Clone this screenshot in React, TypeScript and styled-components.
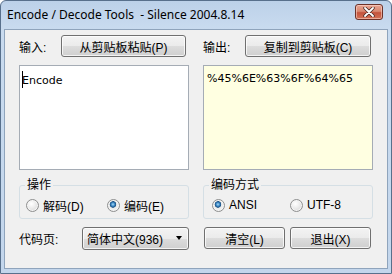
import styled, { createGlobalStyle } from 'styled-components'

const GlobalStyle = createGlobalStyle`
    html, body {
        margin: 0;
        padding: 0;
        background: #ffffff;
    }
    body {
        font-family: "Liberation Sans", "Noto Sans CJK SC", sans-serif;
        font-size: 12px;
        color: #000;
    }
`

export default function App() {
    return (
        <>
            <GlobalStyle />
            <Window>
                <TitleBar>
                    <Title>Encode / Decode Tools  - Silence 2004.8.14</Title>
                    <CloseButton aria-label='close'>
                        <svg width='12' height='10' viewBox='0 0 12 10'>
                            <path d='M2 1 L10 9 M10 1 L2 9' stroke='#4a2a25' strokeWidth='3.4' strokeLinecap='round' />
                            <path d='M2 1 L10 9 M10 1 L2 9' stroke='#ffffff' strokeWidth='1.8' strokeLinecap='round' />
                        </svg>
                    </CloseButton>
                </TitleBar>

                <Body>
                    <LabelRow>
                        <FieldLabel $w={42}>输入:</FieldLabel>
                        <Button $w={125}>从剪贴板粘贴(P)</Button>
                    </LabelRow>
                    <LabelRow>
                        <FieldLabel $w={42}>输出:</FieldLabel>
                        <Button $w={126}>复制到剪贴板(C)</Button>
                    </LabelRow>

                    <TextBox>
                        <Caret />
                        Encode
                    </TextBox>
                    <TextBox $readonly>%45%6E%63%6F%64%65</TextBox>

                    <Group $pad={6} $item={81}>
                        <Legend>操作</Legend>
                        <Option>
                            <RadioDot />
                            解码(D)
                        </Option>
                        <Option>
                            <RadioDot $checked />
                            编码(E)
                        </Option>
                    </Group>
                    <Group $pad={8} $item={78}>
                        <Legend>编码方式</Legend>
                        <Option>
                            <RadioDot $checked />
                            ANSI
                        </Option>
                        <Option>
                            <RadioDot />
                            UTF-8
                        </Option>
                    </Group>

                    <LabelRow>
                        <FieldLabel $w={63}>代码页:</FieldLabel>
                        <Select>
                            <span>简体中文(936)</span>
                            <Arrow />
                        </Select>
                    </LabelRow>
                    <ButtonRow>
                        <Button $w={81}>清空(L)</Button>
                        <Button $w={81}>退出(X)</Button>
                    </ButtonRow>
                </Body>
            </Window>
        </>
    )
}

const Window = styled.div`
    width: 392px;
    height: 274px;
    box-sizing: border-box;
    display: flex;
    flex-direction: column;
    border: 1px solid #58708c;
    border-radius: 6px 6px 0 0;
    background: linear-gradient(180deg, #bcd1e9 0px, #c9dbef 28px, #c3d6ec 100%);
    padding: 0 3px 4px 3px;
`

const TitleBar = styled.div`
    height: 28px;
    flex: none;
    display: flex;
    align-items: flex-start;
    justify-content: space-between;
    padding: 0 5px 0 3px;
`

const Title = styled.div`
    font-family: "Noto Sans", "Open Sans", sans-serif;
    font-size: 12px;
    line-height: 16px;
    margin-top: 6px;
    white-space: pre;
    color: #000;
`

const CloseButton = styled.div`
    width: 28px;
    height: 16px;
    margin-top: 3px;
    box-sizing: border-box;
    border: 1px solid #6d3229;
    border-radius: 3px;
    background: linear-gradient(180deg, #e8a493 0%, #d98870 45%, #c4533c 55%, #d37257 100%);
    box-shadow: inset 0 0 0 1px rgba(255, 220, 210, 0.55);
    display: flex;
    align-items: center;
    justify-content: center;
`

const Body = styled.div`
    flex: 1;
    background: #f0f0f0;
    border: 1px solid #8fa4bc;
    display: grid;
    grid-template-columns: 170px 170px;
    grid-template-rows: 22px 105px 41px 22px;
    column-gap: 14px;
    row-gap: 8px;
    padding: 5px 0 0 14px;
`

const LabelRow = styled.div`
    display: flex;
    align-items: center;
`

const FieldLabel = styled.span<{ $w: number }>`
    width: ${(p) => p.$w}px;
    flex: none;
`

const Button = styled.button<{ $w: number }>`
    width: ${(p) => p.$w}px;
    height: 22px;
    box-sizing: border-box;
    padding: 0;
    border: 1px solid #707070;
    border-radius: 3px;
    background: linear-gradient(180deg, #f3f3f3 0%, #ebebeb 50%, #dddddd 50%, #cfcfcf 100%);
    box-shadow: inset 0 0 0 1px rgba(255, 255, 255, 0.75);
    font: inherit;
    color: #000;
`

const ButtonRow = styled.div`
    display: flex;
    gap: 5px;
    padding-left: 1px;
`

const TextBox = styled.div<{ $readonly?: boolean }>`
    box-sizing: border-box;
    border: 1px solid #a5acb5;
    background: ${(p) => (p.$readonly ? '#ffffe1' : '#ffffff')};
    padding: 5px 3px 0 ${(p) => (p.$readonly ? 3 : 2)}px;
    line-height: 16px;
    font-family: "DejaVu Sans", "Noto Sans CJK SC", sans-serif;
    font-size: 11px;
`

const Caret = styled.span`
    display: inline-block;
    width: 1px;
    height: 17px;
    background: #000;
    vertical-align: -4px;
    margin-right: -1px;
`

const Group = styled.div<{ $pad: number; $item: number }>`
    position: relative;
    margin-top: 7px;
    box-sizing: border-box;
    border: 1px solid #d5dfe5;
    border-radius: 3px;
    display: grid;
    grid-template-columns: ${(p) => p.$item}px 1fr;
    align-items: center;
    padding: 6px 0 0 ${(p) => p.$pad}px;
`

const Legend = styled.span`
    position: absolute;
    top: -9px;
    left: 5px;
    padding: 0 2px;
    line-height: 16px;
    background: #f0f0f0;
`

const Option = styled.label`
    display: flex;
    align-items: center;
    gap: 4px;
`

const RadioDot = styled.span<{ $checked?: boolean }>`
    width: 13px;
    height: 13px;
    flex: none;
    box-sizing: border-box;
    border-radius: 50%;
    border: 1px solid #8e8f8f;
    background: ${(p) =>
        p.$checked
            ? 'radial-gradient(circle at 45% 40%, #a9dcf7 0px, #3a86c4 1.8px, #1b4f80 3px, #e9eaea 3.6px, #f7f7f7 100%)'
            : 'radial-gradient(circle at 40% 35%, #ffffff 0px, #f2f2f2 3px, #cfcfcf 100%)'};
    box-shadow: inset 0 0 0 1px #f4f4f4;
`

const Select = styled.div`
    width: 107px;
    height: 23px;
    box-sizing: border-box;
    border: 1px solid #707070;
    border-radius: 3px;
    background: linear-gradient(180deg, #f3f3f3 0%, #ebebeb 50%, #dddddd 50%, #cfcfcf 100%);
    box-shadow: inset 0 0 0 1px rgba(255, 255, 255, 0.75);
    display: flex;
    align-items: center;
    justify-content: space-between;
    padding: 0 6px 0 4px;
`

const Arrow = styled.span`
    width: 0;
    height: 0;
    border-left: 3.5px solid transparent;
    border-right: 3.5px solid transparent;
    border-top: 4px solid #000;
`
